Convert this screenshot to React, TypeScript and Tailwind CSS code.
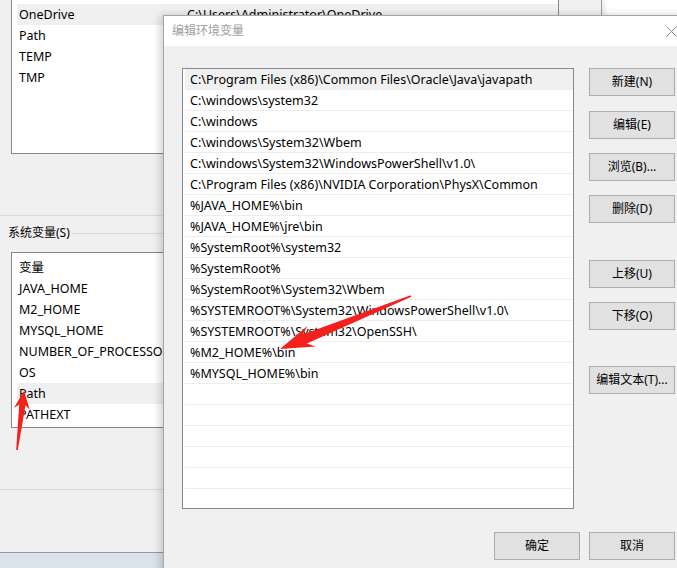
import React from "react";

const userVars = ["OneDrive", "Path", "TEMP", "TMP"];

const sysVars = [
  "变量",
  "JAVA_HOME",
  "M2_HOME",
  "MYSQL_HOME",
  "NUMBER_OF_PROCESSORS",
  "OS",
  "Path",
  "PATHEXT",
];

const paths = [
  "C:\\Program Files (x86)\\Common Files\\Oracle\\Java\\javapath",
  "C:\\windows\\system32",
  "C:\\windows",
  "C:\\windows\\System32\\Wbem",
  "C:\\windows\\System32\\WindowsPowerShell\\v1.0\\",
  "C:\\Program Files (x86)\\NVIDIA Corporation\\PhysX\\Common",
  "%JAVA_HOME%\\bin",
  "%JAVA_HOME%\\jre\\bin",
  "%SystemRoot%\\system32",
  "%SystemRoot%",
  "%SystemRoot%\\System32\\Wbem",
  "%SYSTEMROOT%\\System32\\WindowsPowerShell\\v1.0\\",
  "%SYSTEMROOT%\\System32\\OpenSSH\\",
  "%M2_HOME%\\bin",
  "%MYSQL_HOME%\\bin",
];

const sideButtons = [
  { label: "新建(N)", mt: "mt-0" },
  { label: "编辑(E)", mt: "mt-[15px]" },
  { label: "浏览(B)...", mt: "mt-[14px]" },
  { label: "删除(D)", mt: "mt-[14px]" },
  { label: "上移(U)", mt: "mt-[37px]" },
  { label: "下移(O)", mt: "mt-[14px]" },
  { label: "编辑文本(T)...", mt: "mt-[36px]" },
];

// tapered screenshot-tool arrow, tail -> tip
function arrowPoints(
  tx: number,
  ty: number,
  hx: number,
  hy: number,
  headLen: number,
  headHalf: number,
  tailHalf: number,
  neckHalf: number,
  notch: number
) {
  const dx = hx - tx;
  const dy = hy - ty;
  const len = Math.hypot(dx, dy);
  const ux = dx / len;
  const uy = dy / len;
  const nx = -uy;
  const ny = ux;
  const bx = hx - ux * headLen;
  const by = hy - uy * headLen;
  const jx = bx + ux * notch;
  const jy = by + uy * notch;
  const pts = [
    [tx + nx * tailHalf, ty + ny * tailHalf],
    [jx + nx * neckHalf, jy + ny * neckHalf],
    [bx + nx * headHalf, by + ny * headHalf],
    [hx, hy],
    [bx - nx * headHalf, by - ny * headHalf],
    [jx - nx * neckHalf, jy - ny * neckHalf],
    [tx - nx * tailHalf, ty - ny * tailHalf],
  ];
  return pts.map((p) => `${p[0].toFixed(1)},${p[1].toFixed(1)}`).join(" ");
}

const WinButton = ({ label, className = "" }: { label: string; className?: string }) => (
  <div
    className={`w-[86px] h-[28px] flex items-center justify-center border border-[#adadad] bg-[#e1e1e1] text-[12px] text-black ${className}`}
  >
    {label}
  </div>
);

export default function App() {
  return (
    <div
      className="relative w-[677px] h-[568px] overflow-hidden bg-white text-[12px] text-black"
      style={{ fontFamily: '"Noto Sans", "Noto Sans CJK SC", sans-serif' }}
    >
      {/* Background window: 环境变量 */}
      <div className="w-[602px] h-[553px] bg-[#f0f0f0] border-r border-b border-[#9a9a9a] flex flex-col shadow-[2px_0_6px_rgba(0,0,0,0.12)]">
        {/* user variables list (scrolled, top cut) */}
        <div className="ml-[11px] w-[548px] h-[154px] border-x border-b border-[#828790] bg-white pt-[4px] text-[12.5px]">
          {userVars.map((v, i) => (
            <div
              key={v}
              className={`ml-[5px] h-[21px] flex items-center pt-[2px] ${i === 0 ? "bg-[#f0f0f0]" : ""}`}
            >
              <span className="w-[170px] pl-[2px]">{v}</span>
              {i === 0 && <span>C:\Users\Administrator\OneDrive</span>}
            </div>
          ))}
        </div>

        <div className="mt-[61px] h-px bg-[#dadada]" />

        {/* group label */}
        <div className="mt-[10px] h-[14px] flex items-center pl-[8px]">
          <span className="leading-none">系统变量(S)</span>
          <div className="ml-[2px] flex-1 h-px bg-[#dadada]" />
        </div>

        {/* system variables list */}
        <div className="mt-[12px] ml-[11px] w-[548px] h-[176px] border border-[#828790] bg-white pt-[4px] text-[12.5px]">
          {sysVars.map((v, i) => (
            <div
              key={v + i}
              className={`ml-[5px] h-[21px] flex items-center pl-[2px] pt-[2px] whitespace-nowrap ${
                i === 6 ? "bg-[#f0f0f0]" : ""
              }`}
            >
              {v}
            </div>
          ))}
        </div>

        <div className="mt-[61px] h-px bg-[#dadada]" />
      </div>
      <div className="h-[15px] bg-[#dae3ec]" />

      {/* Foreground dialog: 编辑环境变量 */}
      <div className="absolute left-[163px] top-[15px] w-[530px] h-[570px] border border-[#a5a5a5] bg-[#f0f0f0] shadow-[-3px_0_8px_rgba(0,0,0,0.18)]">
        <div className="h-[30px] bg-white flex items-center justify-between pl-[8px] pr-[15px]">
          <span className="text-[#a0a0a0]">编辑环境变量</span>
          <svg width="11" height="11" viewBox="0 0 11 11">
            <path d="M0.5 0.5 L10.5 10.5 M10.5 0.5 L0.5 10.5" stroke="#8a8a8a" strokeWidth="1" />
          </svg>
        </div>

        <div className="pl-[18px] pt-[22px]">
          <div className="flex">
            <div className="w-[392px] h-[441px] border border-[#828790] bg-white pl-[2px] overflow-hidden text-[12.5px]">
              {Array.from({ length: 21 }).map((_, i) => (
                <div
                  key={i}
                  className={`h-[21px] flex items-center pl-[5px] pt-[3px] border-b border-[#ededed] whitespace-nowrap ${
                    i === 0 ? "bg-[#f0f0f0]" : ""
                  }`}
                >
                  {paths[i] ?? ""}
                </div>
              ))}
            </div>

            <div className="ml-[15px] flex flex-col">
              {sideButtons.map((b) => (
                <WinButton key={b.label} label={b.label} className={b.mt} />
              ))}
            </div>
          </div>

          <div className="mt-[23px] w-[493px] flex justify-end gap-[9px]">
            <WinButton label="确定" />
            <WinButton label="取消" />
          </div>
        </div>
      </div>

      {/* red annotation arrows */}
      <svg
        className="absolute inset-0 pointer-events-none"
        width="677"
        height="568"
        viewBox="0 0 677 568"
      >
        <polygon points={arrowPoints(411, 296, 280, 349, 34, 11, 0.8, 5, 7)} fill="#f3201b" />
        <polygon points={arrowPoints(17, 450, 24, 391, 18, 8, 0.8, 3.2, 4)} fill="#f3201b" />
      </svg>
    </div>
  );
}
